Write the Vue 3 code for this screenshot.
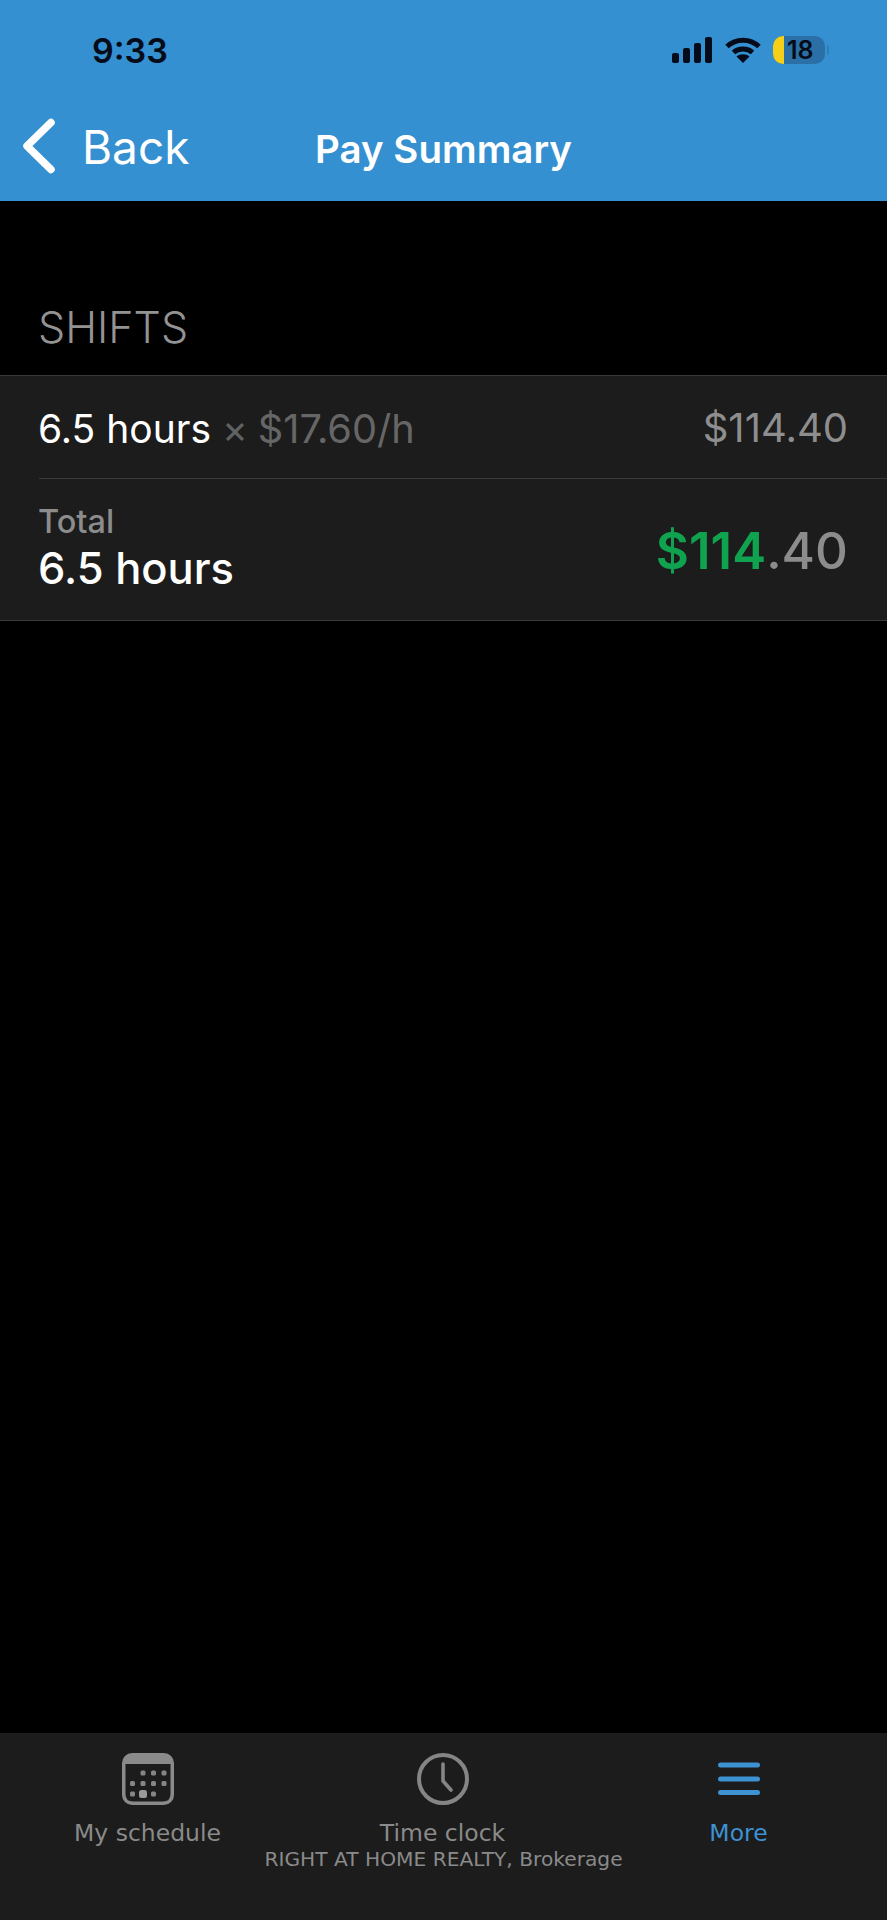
<script setup>
const dots = [
  [21, 20], [31.5, 20], [42, 20],
  [10.5, 30.5], [21, 30.5], [31.5, 30.5], [42, 30.5],
  [10.5, 41], [31.5, 41],
]
</script>

<template>
  <div class="page">
    <header class="top">
      <div class="status">
        <span class="time">9:33</span>
        <div class="indicators">
          <svg class="signal" width="40" height="26" viewBox="0 0 40 26">
            <rect x="0" y="16" width="7" height="10" rx="2" />
            <rect x="11" y="11" width="7" height="15" rx="2" />
            <rect x="22" y="6" width="7" height="20" rx="2" />
            <rect x="33" y="0" width="7" height="26" rx="2" />
          </svg>
          <svg class="wifi" width="36" height="26" viewBox="0 0 36 26">
            <path d="M2 9.5C11 1 25 1 34 9.5" />
            <path d="M8.5 15.5C13.5 10.8 22.5 10.8 27.5 15.5" />
            <path class="solid" d="M18 26L11.5 19.5C15 16.6 21 16.6 24.5 19.5Z" />
          </svg>
          <div class="battery">
            <span class="charge"></span>
            <span class="level">18</span>
            <span class="nub"></span>
          </div>
        </div>
      </div>
      <nav class="nav">
        <svg class="chevron" width="36" height="60" viewBox="0 0 36 60">
          <path d="M30 6.5L6 30L30 53.5" />
        </svg>
        <span class="back">Back</span>
        <h1 class="title">Pay Summary</h1>
      </nav>
    </header>

    <main class="content">
      <h2 class="section">SHIFTS</h2>
      <section class="card">
        <div class="row">
          <div class="shift">
            <span class="hours">6.5 hours</span>
            <span class="times">×</span>
            <span class="rate">$17.60/h</span>
          </div>
          <span class="amount">$114.40</span>
        </div>
        <div class="row total">
          <div class="total-left">
            <span class="total-label">Total</span>
            <span class="total-hours">6.5 hours</span>
          </div>
          <span class="total-amount"><span class="green">$114</span>.40</span>
        </div>
      </section>
    </main>

    <footer class="tabbar">
      <div class="tabs">
        <div class="tab">
          <svg width="52" height="52" viewBox="0 0 52 52">
            <rect x="0" y="0" width="52" height="52" rx="10" fill="#8a8a8a" />
            <path d="M3.5 11H48.5V41Q48.5 48.5 41 48.5H11Q3.5 48.5 3.5 41Z" fill="#1c1c1c" />
            <rect v-for="(d, i) in dots" :key="i" :x="d[0] - 2.5" :y="d[1] - 2.5" width="5" height="5" rx="1.5" fill="#858585" />
            <rect x="17" y="37" width="8" height="8" rx="2.5" fill="#9a9a9a" />
          </svg>
          <span class="label">My schedule</span>
        </div>
        <div class="tab">
          <svg width="52" height="52" viewBox="0 0 52 52" fill="none" stroke="#858585">
            <circle cx="26" cy="26" r="24" stroke-width="4" />
            <path d="M26 11V28L34 37" stroke-width="3.6" stroke-linecap="round" stroke-linejoin="round" />
          </svg>
          <span class="label">Time clock</span>
        </div>
        <div class="tab active">
          <svg width="52" height="52" viewBox="0 0 52 52">
            <rect x="5" y="9.5" width="42" height="5" rx="2.5" />
            <rect x="5" y="23.5" width="42" height="5" rx="2.5" />
            <rect x="5" y="37" width="42" height="5" rx="2.5" />
          </svg>
          <span class="label">More</span>
        </div>
      </div>
      <p class="company">RIGHT AT HOME REALTY, Brokerage</p>
    </footer>
  </div>
</template>

<style>
html, body { margin: 0; background: #000; }
</style>

<style scoped>
.page {
  width: 887px;
  height: 1920px;
  display: flex;
  flex-direction: column;
  background: #000;
  font-family: Inter, "Liberation Sans", sans-serif;
  overflow: hidden;
}
.top { height: 201px; background: #3490d0; color: #fff; flex: none; }
.status {
  height: 100px;
  display: flex;
  align-items: center;
  justify-content: space-between;
  padding: 0 58px 0 92px;
  color: #050b18;
}
.time { font-size: 34px; font-weight: 600; }
.indicators { display: flex; align-items: center; gap: 13px; }
.signal { fill: #050b18; }
.wifi { fill: none; stroke: #050b18; stroke-width: 5; }
.wifi .solid { fill: #050b18; stroke: none; }
.battery {
  width: 52px;
  height: 28px;
  display: flex;
  align-items: center;
  border-radius: 10px;
  background: #2a70a6;
  position: relative;
  margin-right: 4px;
  margin-left: -1px;
}
.charge { width: 11px; height: 28px; background: #f5cf18; flex: none; border-radius: 10px 0 0 10px; }
.level { margin-left: 3px; font-size: 25px; font-weight: 600; color: #050b18; }
.nub {
  position: absolute;
  right: -4px;
  top: 9px;
  width: 2px;
  height: 10px;
  border-radius: 0 2px 2px 0;
  background: #2f7db8;
}
.nav {
  height: 101px;
  position: relative;
  display: flex;
  align-items: center;
  padding-left: 21px;
}
.chevron { fill: none; stroke: #fff; stroke-width: 7.5; stroke-linecap: round; stroke-linejoin: round; margin-top: -10px; }
.back { margin-left: 25px; font-size: 46px; font-weight: 400; margin-top: -8px; }
.title {
  position: absolute;
  left: 0;
  right: 0;
  top: 26px;
  margin: 0;
  text-align: center;
  font-size: 38.5px;
  font-weight: 600;
  line-height: 46px;
}
.content { flex: 1; }
.section {
  margin: 0;
  padding: 102px 38px 0;
  height: 72px;
  font-size: 43px;
  line-height: 48px;
  font-weight: 300;
  color: #939393;
}
.card {
  background: #1c1c1c;
  border-top: 1px solid #3a3a3a;
  border-bottom: 1px solid #3a3a3a;
  padding-left: 39px;
}
.row {
  height: 102px;
  display: flex;
  align-items: center;
  justify-content: space-between;
  padding-right: 39px;
  font-size: 39px;
}
.shift { display: flex; align-items: baseline; margin: 3px 0 0 -1px; }
.hours { color: #fff; }
.times { color: #616161; margin: 0 10px 0 11px; }
.rate { color: #666; font-size: 39.7px; }
.amount { color: #8e8e8e; font-size: 40px; margin-top: 1px; }
.total {
  height: 141px;
  border-top: 1px solid #3a3a3a;
}
.total-left { display: flex; flex-direction: column; margin: -3px 0 0 -1px; }
.total-label { font-size: 32.5px; line-height: 40px; font-weight: 500; color: #8c8c8c; }
.total-hours { font-size: 43.5px; line-height: 52px; font-weight: 500; color: #fff; }
.total-amount { font-size: 51px; font-weight: 500; color: #8c8c8c; margin-top: 1px; }
.green { color: #10a34f; font-weight: 600; }
.tabbar {
  height: 187px;
  flex: none;
  background: #1c1c1c;
  color: #8a8a8a;
  font-family: "DejaVu Sans", sans-serif;
  position: relative;
}
.tabs {
  display: grid;
  grid-template-columns: 295px 295px 297px;
  padding-top: 20px;
}
.tab { display: flex; flex-direction: column; align-items: center; }
.label { margin-top: 14px; font-size: 23.5px; line-height: 28px; }
.active { color: #3d92d2; }
.active svg { fill: #3d92d2; }
.company {
  margin: 0;
  position: absolute;
  left: 0;
  right: 0;
  top: 114px;
  text-align: center;
  font-size: 20.2px;
  line-height: 24px;
}
</style>
